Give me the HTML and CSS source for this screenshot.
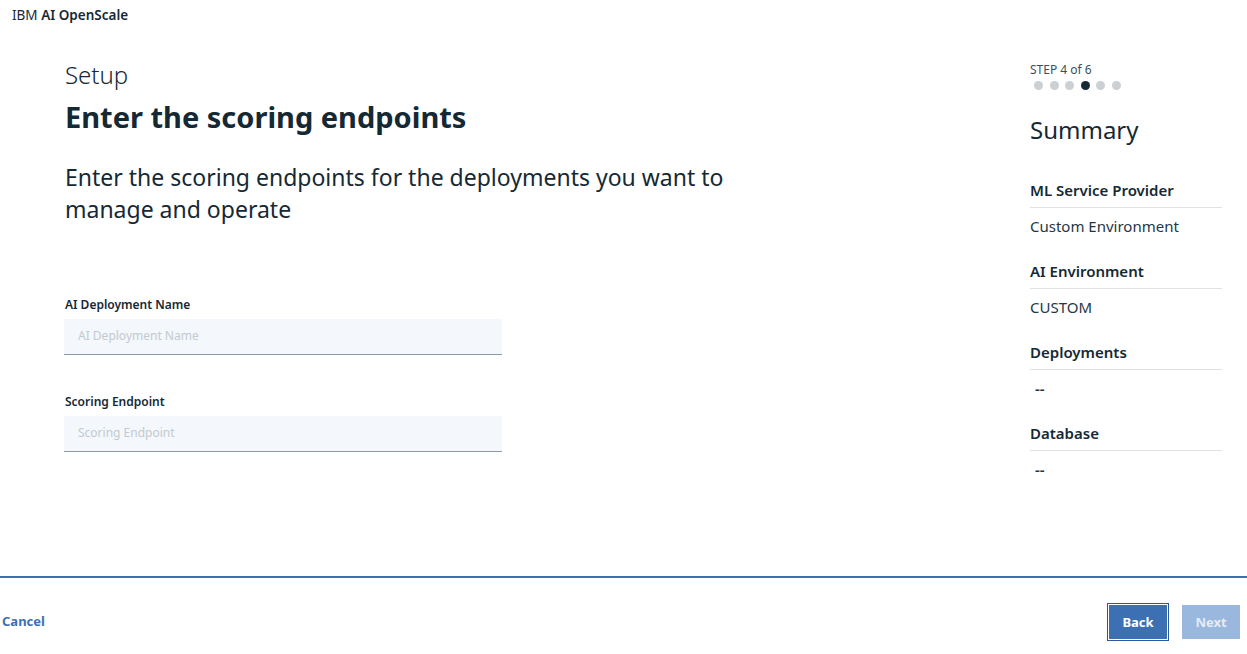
FILE: index.html
```html
<!DOCTYPE html>
<html lang="en">
<head>
<meta charset="utf-8">
<title>IBM AI OpenScale - Setup</title>
<link rel="stylesheet" href="styles.css">
</head>
<body>
<div class="app">
  <header class="topbar">
    <span class="brand-ibm">IBM</span> <span class="brand-name">AI OpenScale</span>
  </header>
  <main class="main">
    <section class="content">
      <div class="eyebrow">Setup</div>
      <h1 class="title">Enter the scoring endpoints</h1>
      <p class="lead">Enter the scoring endpoints for the deployments you want to manage and operate</p>
      <div class="field first">
        <label class="field-label">AI Deployment Name</label>
        <input class="field-input" type="text" placeholder="AI Deployment Name">
      </div>
      <div class="field">
        <label class="field-label">Scoring Endpoint</label>
        <input class="field-input" type="text" placeholder="Scoring Endpoint">
      </div>
    </section>
    <aside class="summary">
      <div class="step-label">STEP 4 of 6</div>
      <div class="dots">
        <span class="dot"></span><span class="dot"></span><span class="dot"></span><span class="dot active"></span><span class="dot"></span><span class="dot"></span>
      </div>
      <h2 class="summary-title">Summary</h2>
      <div class="sum-item">
        <div class="sum-head">ML Service Provider</div>
        <div class="sum-value">Custom Environment</div>
      </div>
      <div class="sum-item">
        <div class="sum-head">AI Environment</div>
        <div class="sum-value">CUSTOM</div>
      </div>
      <div class="sum-item">
        <div class="sum-head">Deployments</div>
        <div class="sum-value dash">--</div>
      </div>
      <div class="sum-item">
        <div class="sum-head">Database</div>
        <div class="sum-value dash">--</div>
      </div>
    </aside>
  </main>
  <footer class="footer">
    <a class="cancel" href="#">Cancel</a>
    <div class="actions">
      <button class="btn btn-back" type="button">Back</button>
      <button class="btn btn-next" type="button" disabled>Next</button>
    </div>
  </footer>
</div>
</body>
</html>
```

FILE: styles.css
```css
* { box-sizing: border-box; }
html, body { margin: 0; padding: 0; }
body {
  font-family: "Noto Sans", "Open Sans", sans-serif;
  color: #152935;
  background: #ffffff;
}
.app {
  height: 654px;
  display: flex;
  flex-direction: column;
}
.topbar {
  height: 30px;
  line-height: 30px;
  padding-left: 12px;
  font-size: 13.5px;
  color: #152935;
}
.brand-ibm { font-weight: 400; }
.brand-name { font-weight: 600; }

.main {
  flex: 1;
  display: flex;
  justify-content: space-between;
  padding: 0 25px 0 65px;
}
.content { width: 700px; }
.eyebrow {
  margin-top: 30px;
  font-size: 24px;
  line-height: 30px;
  font-weight: 300;
}
.title {
  margin: 8px 0 0;
  font-size: 29px;
  line-height: 38px;
  font-weight: 700;
}
.lead {
  margin: 25px 0 0;
  font-size: 23px;
  line-height: 32px;
  font-weight: 400;
  max-width: 690px;
}
.field { margin-top: 39px; }
.field.first { margin-top: 72px; }
.field-label {
  display: block;
  font-size: 12px;
  line-height: 16px;
  font-weight: 600;
  margin-bottom: 6px;
}
.field-input {
  display: block;
  width: 438px;
  height: 36px;
  margin-left: -1px;
  border: 0;
  border-bottom: 1px solid #8c9ba5;
  background: #f4f7fb;
  padding: 0 14px 3px;
  font-family: inherit;
  font-size: 12px;
  color: #152935;
  outline: none;
}
.field-input::placeholder { color: #c3cacf; }

.summary { width: 192px; }
.step-label {
  margin-top: 33px;
  font-size: 12px;
  line-height: 14px;
  color: #3d4f5c;
}
.dots {
  display: flex;
  gap: 6.6px;
  margin-top: 4px;
  padding-left: 4px;
}
.dot {
  width: 9px;
  height: 9px;
  border-radius: 50%;
  background: #cbd0d4;
}
.dot.active { background: #152935; }
.summary-title {
  margin: 25px 0 0;
  font-size: 24px;
  line-height: 30px;
  font-weight: 400;
}
.sum-item { margin-top: 35px; }
.sum-item + .sum-item { margin-top: 25px; }
.sum-head {
  font-size: 15px;
  line-height: 20px;
  font-weight: 600;
  padding-bottom: 7px;
  border-bottom: 1px solid #dfe3e6;
}
.sum-value {
  margin-top: 8px;
  font-size: 15px;
  line-height: 20px;
  color: #253746;
}
.sum-value.dash { padding-left: 5px; font-weight: 600; }

.footer {
  height: 78px;
  border-top: 2px solid #3d70b2;
  display: flex;
  align-items: center;
  justify-content: space-between;
  padding: 10px 7px 0 2px;
}
.cancel {
  color: #3d70b2;
  font-size: 13px;
  font-weight: 700;
  text-decoration: none;
}
.actions {
  display: flex;
  gap: 15px;
  margin-top: 2px;
}
.btn {
  height: 34px;
  border: 0;
  font-family: inherit;
  font-size: 13px;
  font-weight: 700;
  color: #ffffff;
  padding: 0;
}
.btn-back {
  width: 58px;
  background: #3d70b2;
  box-shadow: 0 0 0 1px #ffffff, 0 0 0 2px #2c5a96;
}
.btn-next {
  width: 58px;
  background: #9ab8dd;
  color: #e4ecf6;
}
```
